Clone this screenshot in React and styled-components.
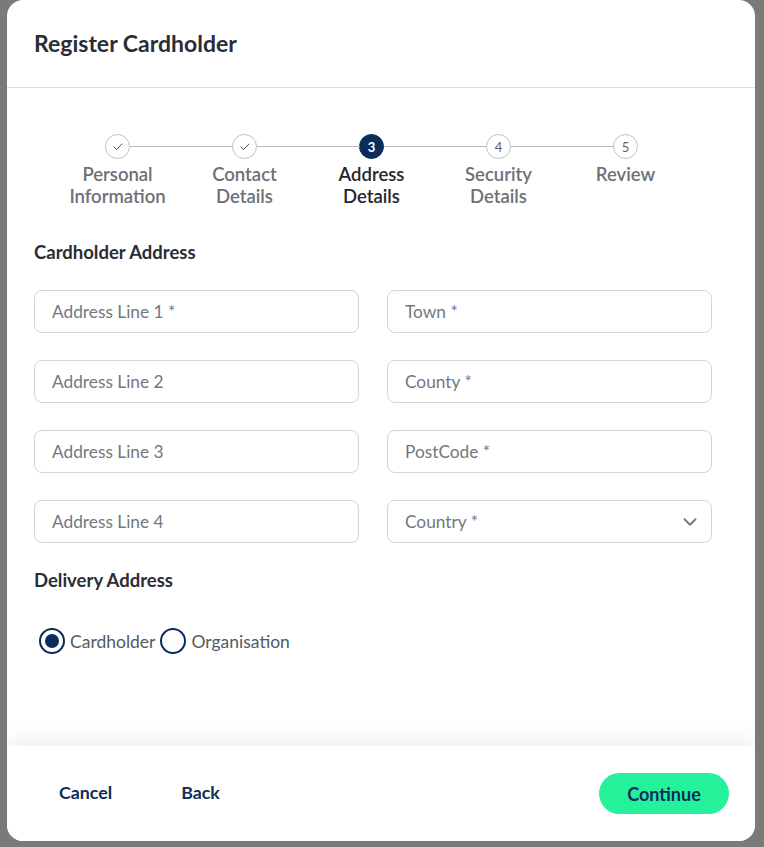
import React from "react";
import styled, { createGlobalStyle } from "styled-components";
import { Check, ChevronDown } from "lucide-react";

const GlobalStyle = createGlobalStyle`
    body {
        margin: 0;
        background: #7a7a7a;
        font-family: Lato, "Noto Sans", "Liberation Sans", sans-serif;
    }
    * { box-sizing: border-box; }
`;

const NAVY = "#0b2d5b";

const Page = styled.div`
    min-height: 847px;
    padding: 0 9px 6px 7px;
`;

const Modal = styled.div`
    width: 748px;
    height: 841px;
    background: #fff;
    border-radius: 16px;
    display: flex;
    flex-direction: column;
    overflow: hidden;
`;

const Header = styled.div`
    height: 88px;
    flex-shrink: 0;
    display: flex;
    align-items: center;
    padding: 0 27px 1px;
    border-bottom: 1px solid #dcdcdc;
`;

const Title = styled.h2`
    margin: 0;
    font-size: 23px;
    font-weight: 700;
    color: #2a2d33;
`;

const Body = styled.div`
    flex: 1;
    padding: 46px 27px 0;
`;

const Stepper = styled.div`
    display: grid;
    grid-template-columns: repeat(5, 127px);
    margin-left: 20px;
`;

const Step = styled.div`
    position: relative;
    display: flex;
    flex-direction: column;
    align-items: center;

    &:not(:first-child)::before {
        content: "";
        position: absolute;
        top: 12px;
        left: calc(-50% + 12px);
        right: calc(50% + 12px);
        height: 1px;
        background: #b8b8b8;
    }
`;

const Circle = styled.div`
    width: 25px;
    height: 25px;
    border-radius: 50%;
    border: 1px solid ${p => (p.$active ? NAVY : "#c2c2c2")};
    background: ${p => (p.$active ? NAVY : "#fff")};
    color: ${p => (p.$active ? "#fff" : "#666")};
    font-size: 13px;
    font-weight: ${p => (p.$active ? 700 : 400)};
    display: flex;
    align-items: center;
    justify-content: center;
`;

const StepLabel = styled.div`
    margin-top: 4px;
    font-size: 18.5px;
    line-height: 22px;
    font-weight: 600;
    text-align: center;
    color: ${p => (p.$active ? "#23262b" : "#6c7078")};
`;

const SectionTitle = styled.h3`
    margin: ${p => p.$top}px 0 0;
    font-size: 18.5px;
    line-height: 24px;
    font-weight: 700;
    color: #2a2d33;
`;

const FieldGrid = styled.div`
    margin-top: 26px;
    display: grid;
    grid-template-columns: 325px 325px;
    column-gap: 28px;
    row-gap: 27px;
`;

const Input = styled.input`
    height: 43px;
    width: 100%;
    border: 1px solid #d5d5d5;
    border-radius: 8px;
    padding: 0 17px;
    font-family: inherit;
    font-size: 17.3px;
    color: #333;
    outline: none;

    &::placeholder {
        color: #73777f;
    }
`;

const SelectBox = styled.div`
    height: 43px;
    border: 1px solid #d5d5d5;
    border-radius: 8px;
    padding: 0 10px 0 17px;
    display: flex;
    align-items: center;
    justify-content: space-between;
    font-size: 17.3px;
    color: #73777f;
`;

const RadioRow = styled.div`
    margin-top: 36px;
    margin-left: 5px;
    display: flex;
    align-items: center;
    gap: 5px;
`;

const RadioOption = styled.label`
    display: flex;
    align-items: center;
    gap: 5px;
    font-size: 17.5px;
    color: #555a61;
`;

const RadioRing = styled.span`
    width: 26px;
    height: 26px;
    border-radius: 50%;
    border: 2px solid ${NAVY};
    display: flex;
    align-items: center;
    justify-content: center;

    &::after {
        content: "";
        width: 14px;
        height: 14px;
        border-radius: 50%;
        background: ${p => (p.$checked ? NAVY : "transparent")};
    }
`;

const Footer = styled.div`
    height: 95px;
    flex-shrink: 0;
    display: flex;
    align-items: center;
    padding: 0 26px;
    gap: 17px;
    background: #fff;
    box-shadow: 0 -6px 22px rgba(0, 0, 0, 0.07);
`;

const TextButton = styled.button`
    border: none;
    background: none;
    padding: 4px 26px 8px;
    font-family: inherit;
    font-size: 17.8px;
    font-weight: 700;
    color: ${NAVY};
`;

const PrimaryButton = styled.button`
    margin-left: auto;
    width: 130px;
    height: 41px;
    border: none;
    border-radius: 21px;
    background: #26f19b;
    font-family: inherit;
    font-size: 18px;
    font-weight: 700;
    color: ${NAVY};
`;

const steps = [
    { label: ["Personal", "Information"], done: true },
    { label: ["Contact", "Details"], done: true },
    { label: ["Address", "Details"], active: true },
    { label: ["Security", "Details"] },
    { label: ["Review"] },
];

const fields = [
    "Address Line 1 *", "Town *",
    "Address Line 2", "County *",
    "Address Line 3", "PostCode *",
    "Address Line 4",
];

export default function App() {
    return (
        <Page>
            <GlobalStyle />
            <Modal>
                <Header>
                    <Title>Register Cardholder</Title>
                </Header>
                <Body>
                    <Stepper>
                        {steps.map((s, i) => (
                            <Step key={i}>
                                <Circle $active={s.active}>
                                    {s.done ? <Check size={12} strokeWidth={2} color="#555" /> : i + 1}
                                </Circle>
                                <StepLabel $active={s.active}>
                                    {s.label.map(l => <div key={l}>{l}</div>)}
                                </StepLabel>
                            </Step>
                        ))}
                    </Stepper>

                    <SectionTitle $top={33}>Cardholder Address</SectionTitle>
                    <FieldGrid>
                        {fields.map(f => <Input key={f} placeholder={f} />)}
                        <SelectBox>
                            Country *
                            <ChevronDown size={22} strokeWidth={2} color="#777" />
                        </SelectBox>
                    </FieldGrid>

                    <SectionTitle $top={25}>Delivery Address</SectionTitle>
                    <RadioRow>
                        <RadioOption><RadioRing $checked />Cardholder</RadioOption>
                        <RadioOption><RadioRing />Organisation</RadioOption>
                    </RadioRow>
                </Body>
                <Footer>
                    <TextButton>Cancel</TextButton>
                    <TextButton>Back</TextButton>
                    <PrimaryButton>Continue</PrimaryButton>
                </Footer>
            </Modal>
        </Page>
    );
}
